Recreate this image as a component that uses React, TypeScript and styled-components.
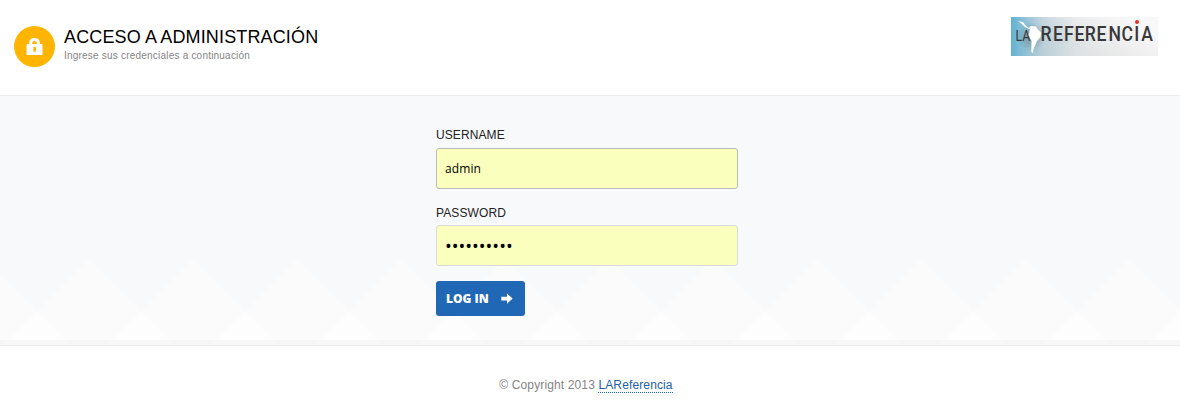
import React from "react";
import styled, { createGlobalStyle } from "styled-components";

const Global = createGlobalStyle`
  *, *::before, *::after { box-sizing: border-box; }
  body { margin: 0; background: #fff; font-family: "Liberation Sans", Arial, sans-serif; font-size: 12px; color: #222; }
`;

const Page = styled.div`
  display: flex;
  flex-direction: column;
  height: 413px;
  overflow: hidden;
`;

const Header = styled.header`
  display: flex;
  justify-content: space-between;
  align-items: flex-start;
  height: 95px;
  padding: 17px 22px 0 14px;
`;

const Brand = styled.div`
  display: flex;
  gap: 9px;
  padding-top: 9px;
`;

const Badge = styled.span`
  display: flex;
  align-items: center;
  justify-content: center;
  width: 41px;
  height: 41px;
  border-radius: 50%;
  background: #ffb400;
`;

const Title = styled.h1`
  margin: 0;
  font-size: 18px;
  font-weight: 400;
  line-height: 22px;
  letter-spacing: 0.14px;
  color: #000;
  white-space: nowrap;
`;

const Subtitle = styled.p`
  margin: 1px 0 0;
  font-size: 10px;
  line-height: 14px;
  letter-spacing: 0.21px;
  color: #858585;
  white-space: nowrap;
`;

const Main = styled.main`
  position: relative;
  display: flex;
  justify-content: center;
  height: 251px;
  border-top: 1px solid #ebedef;
  border-bottom: 1px solid #ececec;
  background: #f8f9fb;
`;

const Backdrop = styled.svg`
  position: absolute;
  left: 0;
  bottom: 0;
  width: 100%;
  height: 85px;
`;

const Form = styled.form`
  position: relative;
  display: flex;
  flex-direction: column;
  align-items: flex-start;
  width: 302px;
  margin-right: 6px;
  padding-top: 31px;
`;

const Label = styled.label`
  height: 21px;
  font-size: 12px;
  line-height: 16px;
  letter-spacing: 0.1px;
  color: #222;
`;

const Input = styled.input<{ $active?: boolean }>`
  width: 302px;
  height: 41px;
  padding: 0 8px;
  border: 1px solid ${(p) => (p.$active ? "#b9bbb9" : "#d9dbd9")};
  border-radius: 3px;
  outline: none;
  background: #faffbd;
  color: #000;
  font-family: "Open Sans", "Noto Sans", sans-serif;
  font-size: 12px;
  letter-spacing: 0.1px;
  margin: 0 0 16px;

  &[type="password"] {
    margin: -1px 0 15px;
    font-size: 18px;
    letter-spacing: 0;
  }
`;

const Button = styled.button`
  display: flex;
  align-items: center;
  gap: 12px;
  width: 89px;
  height: 35px;
  padding: 0 0 0 10px;
  border: 0;
  border-radius: 3px;
  background: #2068b5;
  color: #fff;
  font-family: "Open Sans", sans-serif;
  font-size: 12px;
  font-weight: 800;
  white-space: nowrap;
`;

const Footer = styled.footer`
  padding: 32px 8px 0 0;
  font-size: 12px;
  line-height: 14px;
  letter-spacing: 0.13px;
  text-align: center;
  color: #858585;
`;

const Link = styled.a`
  display: inline-block;
  border-bottom: 1px dotted #2068b5;
  color: #1c5fa8;
  text-decoration: none;
`;

const LogoArt = styled.svg`
  display: block;
  overflow: visible;
`;

const Lock = () => (
  <svg width="17" height="17" viewBox="0 0 17 17">
    <path d="M4.7 7V4.8Q4.7 1.500 8.500 1.500T12.300 4.800V7" fill="none" stroke="#fff" strokeWidth="3" />
    <rect x="0.5" y="6" width="16" height="11" rx="1" fill="#fff" />
    <rect x="7.3" y="8.8" width="2.6" height="5" rx="1" fill="#ffb400" />
  </svg>
);

const Arrow = () => (
  <svg width="12" height="11" viewBox="0 0 12 11">
    <path d="M0.3 3.7H6V0.5L11.7 5.6L6 10.7V7.5H0.3Z" fill="#fff" />
  </svg>
);

const LETTER_SCALE = 0.84;
const LETTER_X = [29.4, 42, 53, 63.5, 73.8, 85.4, 97.5, 110.4, 123.2, 130.2]
  .map((x) => (x / LETTER_SCALE).toFixed(2))
  .join(" ");

const Logo = () => (
  <LogoArt width="147" height="39" viewBox="0 0 147 39">
    <defs>
      <linearGradient id="sky" x1="0" x2="1" y1="0" y2="0">
        <stop offset="0" stopColor="#62b2d2" />
        <stop offset="0.1" stopColor="#8fc1d6" />
        <stop offset="0.22" stopColor="#bccfd8" />
        <stop offset="0.45" stopColor="#dfe2e4" />
        <stop offset="0.75" stopColor="#e6e6e6" />
        <stop offset="1" stopColor="#e9e9e9" />
      </linearGradient>
      <linearGradient id="shine" gradientUnits="userSpaceOnUse" x1="105" x2="85" y1="-5" y2="38">
        <stop offset="0" stopColor="#fff" stopOpacity="0.7" />
        <stop offset="1" stopColor="#fff" stopOpacity="0" />
      </linearGradient>
      <radialGradient id="shade">
        <stop offset="0" stopColor="#667780" stopOpacity="0.6" />
        <stop offset="1" stopColor="#667780" stopOpacity="0" />
      </radialGradient>
    </defs>
    <rect width="147" height="39" fill="url(#sky)" />
    <rect width="147" height="39" fill="url(#shine)" />
    <ellipse cx="20" cy="20" rx="14" ry="15" fill="url(#shade)" />
    <text x="4.5" y="23.7" fontFamily="Roboto, sans-serif" fontSize="14" textLength="15" lengthAdjust="spacingAndGlyphs" fill="#38383a">LA</text>
    <path d="M7 4L12 5L14.5 8.5L17.5 11L20 9L25 9.5L27 12.5L30 15.5L29.5 20L26 24L24 29L22.5 32L22 36L20.3 35L20.5 24L17.5 18L19 12.5L14 10L10 6.5Z" fill="#fff" />
    <text transform={`scale(${LETTER_SCALE} 1)`} x={LETTER_X} y="23.7" fontFamily="Roboto, sans-serif" fontSize="21" fontWeight="500" fill="#38383a">REFERENCIA</text>
    <circle cx="126" cy="5" r="2" fill="#e8301e" />
  </LogoArt>
);

const PEAKS = Array.from({ length: 13 }, (_, i) => -15 + i * 104);

const Diamonds = () => (
  <Backdrop>
    {PEAKS.map((x) => (
      <path key={x} d={`M${x - 2} 1H${x + 2}L${x + 86} 85H${x - 86}Z`} fill="#fbfbfb" />
    ))}
    {PEAKS.map((x) => (
      <path key={x} d={`M${x + 52} 51L${x + 86} 85H${x + 18}Z`} fill="#fdfdfd" />
    ))}
    <rect y="80" width="1180" height="5" fill="#000" fillOpacity="0.02" />
  </Backdrop>
);

export default function App() {
  return (
    <Page>
      <Global />
      <Header>
        <Brand>
          <Badge><Lock /></Badge>
          <div>
            <Title>ACCESO A ADMINISTRACIÓN</Title>
            <Subtitle>Ingrese sus credenciales a continuación</Subtitle>
          </div>
        </Brand>
        <Logo />
      </Header>
      <Main>
        <Diamonds />
        <Form onSubmit={(e) => e.preventDefault()}>
          <Label htmlFor="username">USERNAME</Label>
          <Input id="username" defaultValue="admin" $active />
          <Label htmlFor="password">PASSWORD</Label>
          <Input id="password" type="password" defaultValue="adminadmin" />
          <Button type="submit">LOG IN<Arrow /></Button>
        </Form>
      </Main>
      <Footer>© Copyright 2013 <Link href="#">LAReferencia</Link></Footer>
    </Page>
  );
}
